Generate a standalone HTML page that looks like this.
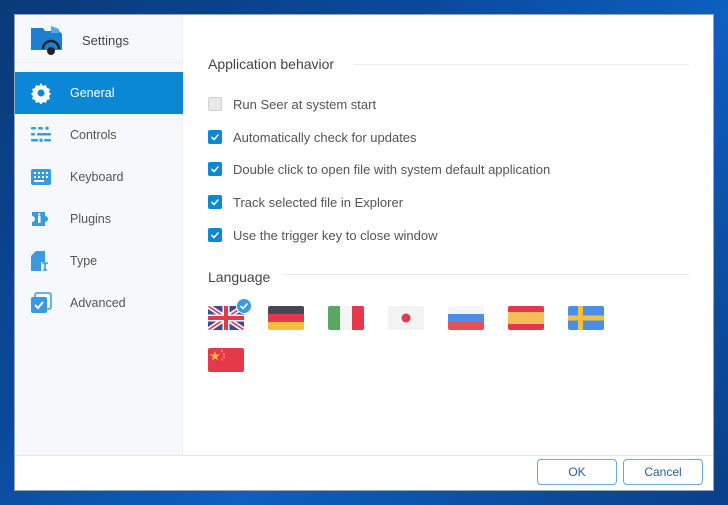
<!DOCTYPE html>
<html><head><meta charset="utf-8"><style>
*{margin:0;padding:0;box-sizing:border-box}
body{width:728px;height:505px;overflow:hidden;font-family:"Liberation Sans",sans-serif;
background:linear-gradient(135deg,#0a3a78 0%,#0b4a9a 35%,#0d5fc0 60%,#0a3f88 100%);position:relative}
.win{position:absolute;left:14px;top:14px;width:700px;height:477px;background:#fff;border:1px solid #9aa6b4}
.side{position:absolute;left:0;top:0;width:168px;height:440px;background:#f6f8fb;border-right:1px solid #eceff3}
.head{height:48px;border-bottom:1px solid #eceff3;position:relative}
.head span{position:absolute;left:67px;top:18px;font-size:13px;color:#444}
.item{position:absolute;left:0;width:168px;height:42px;font-size:12.5px;color:#555}
.item span{position:absolute;left:55px;top:14px}
.item svg{position:absolute;left:15px;top:10px}
.sel{background:#0a88d6;color:#fff}
.h{position:absolute;font-size:14px;color:#444}
.line{position:absolute;height:1px;background:#eeeeee}
.row{position:absolute;left:193px;font-size:13px;color:#555}
.cb{position:absolute;left:0;top:0;width:14px;height:14px;border-radius:2px;background:#0a88d6}
.cb.off{background:#e8e8e8;border:1px solid #d0d0d0}
.cb svg{position:absolute;left:2px;top:2px}
.row span{position:absolute;left:25px;top:0;white-space:nowrap}
.fl{position:absolute;width:36px;height:24px;border-radius:2px;overflow:hidden}
.foot{position:absolute;left:0;top:440px;width:698px;height:1px;background:#e6e6e6}
.btn{position:absolute;top:444px;width:80px;height:26px;border:1px solid #6fa8d8;border-radius:4px;font-size:12px;color:#2a5f8f;text-align:center;line-height:24px}
</style></head><body>
<div class="win">
 <div class="side">
  <div class="head">
   <svg style="position:absolute;left:14px;top:10px" width="38" height="30" viewBox="0 0 38 30"><path d="M2 3h12l2 3h14l3 3v16H2z" fill="#1d7fcf"/><path d="M22 1l8 3v4h-8z" fill="#5aa7e8"/><path d="M14 24a8 8 0 0 1 16 0" fill="none" stroke="#222" stroke-width="2.4"/><circle cx="22" cy="26" r="4" fill="#222"/></svg>
   <span>Settings</span>
  </div>
  <div class="item sel" style="top:57px"><svg width="22" height="22" viewBox="0 0 22 22"><path d="M11 1l2 3 3-1 1 3 3 1-1 3 2 2-2 2 1 3-3 1-1 3-3-1-2 3-2-3-3 1-1-3-3-1 1-3-2-2 2-2-1-3 3-1 1-3 3 1z" fill="#fff"/><circle cx="11" cy="11" r="3.5" fill="#0a88d6"/></svg><span>General</span></div>
  <div class="item" style="top:99px"><svg width="22" height="22" viewBox="0 0 22 22" fill="#3a9ae0"><rect x="1" y="3" width="5" height="2.5" rx="1"/><rect x="8" y="3" width="5" height="2.5" rx="1"/><circle cx="17" cy="4.2" r="1.7"/><rect x="1" y="9" width="4" height="2.5" rx="1"/><rect x="7" y="9" width="14" height="2.5" rx="1"/><rect x="1" y="15" width="7" height="2.5" rx="1"/><circle cx="11" cy="16.2" r="1.7"/><rect x="14" y="15" width="7" height="2.5" rx="1"/></svg><span>Controls</span></div>
  <div class="item" style="top:141px"><svg width="22" height="22" viewBox="0 0 22 22"><rect x="1" y="3" width="20" height="16" rx="2" fill="#3a9ae0"/><g fill="#fff"><rect x="4" y="6" width="2" height="2"/><rect x="8" y="6" width="2" height="2"/><rect x="12" y="6" width="2" height="2"/><rect x="16" y="6" width="2" height="2"/><rect x="4" y="10" width="2" height="2"/><rect x="8" y="10" width="2" height="2"/><rect x="12" y="10" width="2" height="2"/><rect x="16" y="10" width="2" height="2"/><rect x="4" y="14" width="10" height="2"/></g></svg><span>Keyboard</span></div>
  <div class="item" style="top:183px"><svg width="22" height="22" viewBox="0 0 22 22"><path d="M2 4h13v4a2.5 2.5 0 1 1 0 6v4H2v-4a2.5 2.5 0 1 0 0-6z" fill="#3a9ae0"/><rect x="8" y="8" width="2.5" height="7" fill="#fff"/><circle cx="9.2" cy="6.5" r="1.2" fill="#fff"/></svg><span>Plugins</span></div>
  <div class="item" style="top:225px"><svg width="22" height="22" viewBox="0 0 22 22"><path d="M6 1h9v20H1V6z" fill="#3a9ae0"/><path d="M11 12h8v9h-8z" fill="#f6f8fb"/><path d="M12 13h6M15 13v7M13 20h4" stroke="#3a9ae0" stroke-width="1.6" fill="none"/></svg><span>Type</span></div>
  <div class="item" style="top:267px"><svg width="22" height="22" viewBox="0 0 22 22"><rect x="5" y="1" width="16" height="16" rx="2" fill="none" stroke="#3a9ae0" stroke-width="1.5"/><rect x="1" y="5" width="16" height="16" rx="2" fill="#3a9ae0"/><path d="M5 13l3 3 5-6" stroke="#fff" stroke-width="2" fill="none"/></svg><span>Advanced</span></div>
 </div>
 <div class="h" style="left:193px;top:41px">Application behavior</div>
 <div class="line" style="left:338px;top:49px;width:336px"></div>
 <div class="row" style="top:82px"><div class="cb off"></div><span>Run Seer at system start</span></div>
 <div class="row" style="top:115px"><div class="cb"><svg width="10" height="10" viewBox="0 0 10 10"><path d="M1.5 5l2.5 2.5 4.5-5" stroke="#fff" stroke-width="1.6" fill="none"/></svg></div><span>Automatically check for updates</span></div>
 <div class="row" style="top:147px"><div class="cb"><svg width="10" height="10" viewBox="0 0 10 10"><path d="M1.5 5l2.5 2.5 4.5-5" stroke="#fff" stroke-width="1.6" fill="none"/></svg></div><span>Double click to open file with system default application</span></div>
 <div class="row" style="top:180px"><div class="cb"><svg width="10" height="10" viewBox="0 0 10 10"><path d="M1.5 5l2.5 2.5 4.5-5" stroke="#fff" stroke-width="1.6" fill="none"/></svg></div><span>Track selected file in Explorer</span></div>
 <div class="row" style="top:213px"><div class="cb"><svg width="10" height="10" viewBox="0 0 10 10"><path d="M1.5 5l2.5 2.5 4.5-5" stroke="#fff" stroke-width="1.6" fill="none"/></svg></div><span>Use the trigger key to close window</span></div>
 <div class="h" style="left:193px;top:254px">Language</div>
 <div class="line" style="left:267px;top:259px;width:407px"></div>
 <svg class="fl" style="left:193px;top:291px" viewBox="0 0 36 24"><rect width="36" height="24" fill="#41479b"/><path d="M0 0L36 24M36 0L0 24" stroke="#fff" stroke-width="5"/><path d="M0 0L36 24M36 0L0 24" stroke="#e5394b" stroke-width="1.6"/><path d="M18 0v24M0 12h36" stroke="#fff" stroke-width="7"/><path d="M18 0v24M0 12h36" stroke="#e5394b" stroke-width="4"/></svg>
 <svg style="position:absolute;left:221px;top:283px" width="16" height="16" viewBox="0 0 16 16"><circle cx="8" cy="8" r="7.5" fill="#3b9be3" stroke="#fff" stroke-width="1"/><path d="M4.5 8l2.5 2.5 4.5-5" stroke="#fff" stroke-width="1.6" fill="none"/></svg>
 <svg class="fl" style="left:253px;top:291px" viewBox="0 0 36 24"><rect width="36" height="8" fill="#464655"/><rect y="8" width="36" height="8" fill="#e5394b"/><rect y="16" width="36" height="8" fill="#f6bd3f"/></svg>
 <svg class="fl" style="left:313px;top:291px" viewBox="0 0 36 24"><rect width="12" height="24" fill="#57a862"/><rect x="12" width="12" height="24" fill="#f4f5f5"/><rect x="24" width="12" height="24" fill="#e5394b"/></svg>
 <svg class="fl" style="left:373px;top:291px" viewBox="0 0 36 24"><rect width="36" height="24" fill="#f3f3f4"/><circle cx="18" cy="12" r="4.5" fill="#e5394b"/></svg>
 <svg class="fl" style="left:433px;top:291px" viewBox="0 0 36 24"><rect width="36" height="8" fill="#f4f5f5"/><rect y="8" width="36" height="8" fill="#4a90e2"/><rect y="16" width="36" height="8" fill="#e5505f"/></svg>
 <svg class="fl" style="left:493px;top:291px" viewBox="0 0 36 24"><rect width="36" height="24" fill="#e5394b"/><rect y="6" width="36" height="12" fill="#f6bd5a"/></svg>
 <svg class="fl" style="left:553px;top:291px" viewBox="0 0 36 24"><rect width="36" height="24" fill="#4a90e2"/><rect x="10" width="5" height="24" fill="#f6bd3f"/><rect y="9.5" width="36" height="5" fill="#f6bd3f"/></svg>
 <svg class="fl" style="left:193px;top:333px" viewBox="0 0 36 24"><rect width="36" height="24" fill="#e5394b"/><path d="M7 3l1.3 3.5H12l-3 2.3 1.1 3.6L7 10.2 3.9 12.4 5 8.8 2 6.5h3.7z" fill="#f6bd3f"/><g fill="#f6bd3f"><circle cx="14" cy="3" r="0.9"/><circle cx="16" cy="6" r="0.9"/><circle cx="16" cy="9" r="0.9"/><circle cx="14" cy="11.5" r="0.9"/></g></svg>
 <div class="foot"></div>
 <div class="btn" style="left:522px">OK</div>
 <div class="btn" style="left:608px">Cancel</div>
</div>
</body></html>
